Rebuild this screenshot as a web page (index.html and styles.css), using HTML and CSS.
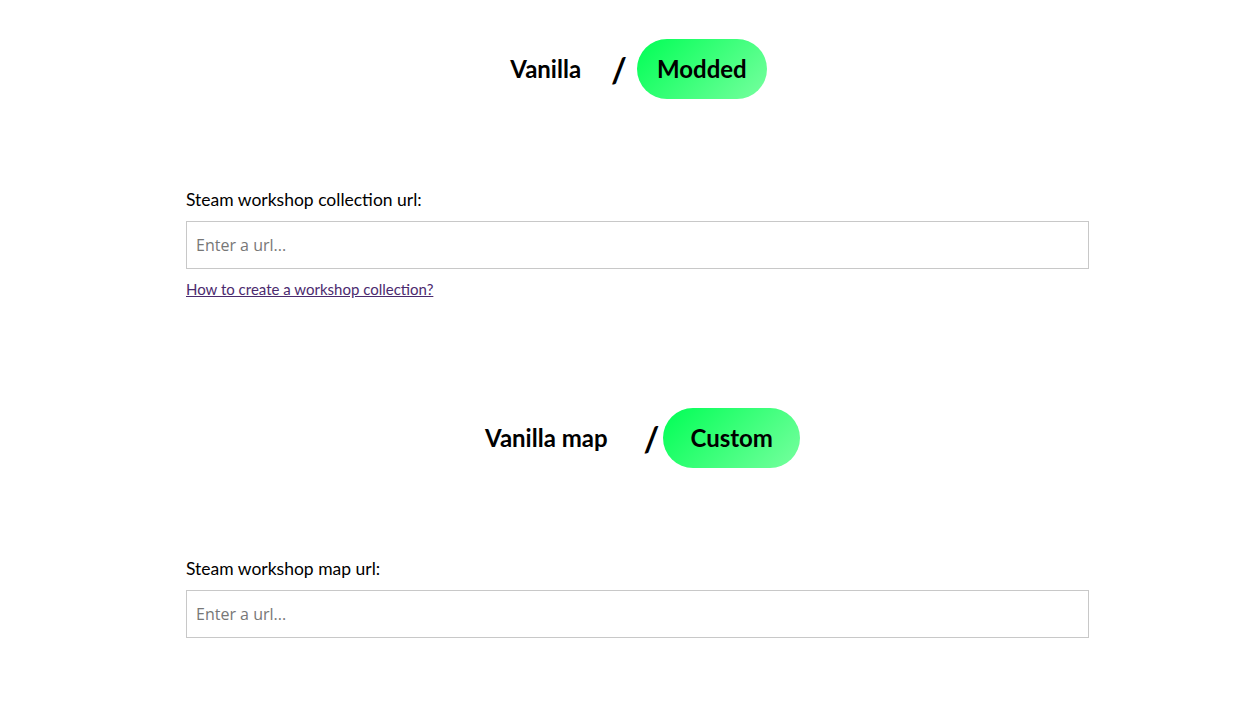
FILE: index.html
```html
<!DOCTYPE html>
<html lang="en">
<head>
    <meta charset="UTF-8">
    <meta name="viewport" content="width=device-width, initial-scale=1.0">
    <title>Server setup</title>
    <link rel="stylesheet" href="styles.css">
</head>
<body>
    <div class="toggle">
        <button class="toggle-option">Vanilla</button>
        <span class="toggle-slash">/</span>
        <button class="toggle-option active">Modded</button>
    </div>
    <div class="field">
        <label for="collectionUrl">Steam workshop collection url:</label>
        <input type="text" id="collectionUrl" placeholder="Enter a url...">
        <a class="help-link" href="#">How to create a workshop collection?</a>
    </div>

    <div class="toggle second">
        <button class="toggle-option">Vanilla map</button>
        <span class="toggle-slash">/</span>
        <button class="toggle-option active wide">Custom</button>
    </div>
    <div class="field">
        <label for="mapUrl">Steam workshop map url:</label>
        <input type="text" id="mapUrl" placeholder="Enter a url...">
    </div>
</body>
</html>
```
FILE: styles.css
```css
body {
    font-family: 'Lato', 'Noto Sans', sans-serif;
    margin: 0;
    padding-top: 39px;
    background-color: #fff;
    color: #000;
}
.toggle {
    display: flex;
    justify-content: center;
    align-items: center;
}
.toggle.second {
    margin-top: 110px;
    padding-left: 8px;
}
.toggle-option {
    font-family: 'Lato', 'Noto Sans', sans-serif;
    font-size: 24px;
    font-weight: bold;
    line-height: 30px;
    padding: 15px 20px;
    border: none;
    border-radius: 30px;
    background: none;
    color: #000;
    cursor: pointer;
}
.toggle-option.active {
    background: linear-gradient(135deg, #00ff55, #77ff9f);
}
.toggle-option.wide {
    padding: 15px 27px;
}
.toggle-slash {
    font-size: 34px;
    font-weight: bold;
    margin: 0 10px;
}
.second .toggle-slash {
    margin: 0 4px 0 16px;
}
.field {
    width: 903px;
    margin: 90px 168px 0 186px;
}
.field label {
    display: block;
    font-size: 17.5px;
    line-height: 22px;
    margin-bottom: 10px;
}
.field input {
    display: block;
    box-sizing: border-box;
    width: 100%;
    height: 48px;
    padding: 0 9px;
    border: 1px solid #c8c8c8;
    font-family: 'Open Sans', sans-serif;
    font-size: 16px;
}
.field input::placeholder {
    color: #777;
}
.help-link {
    display: inline-block;
    margin-top: 11px;
    font-size: 15px;
    color: #4b2a6e;
}
```
